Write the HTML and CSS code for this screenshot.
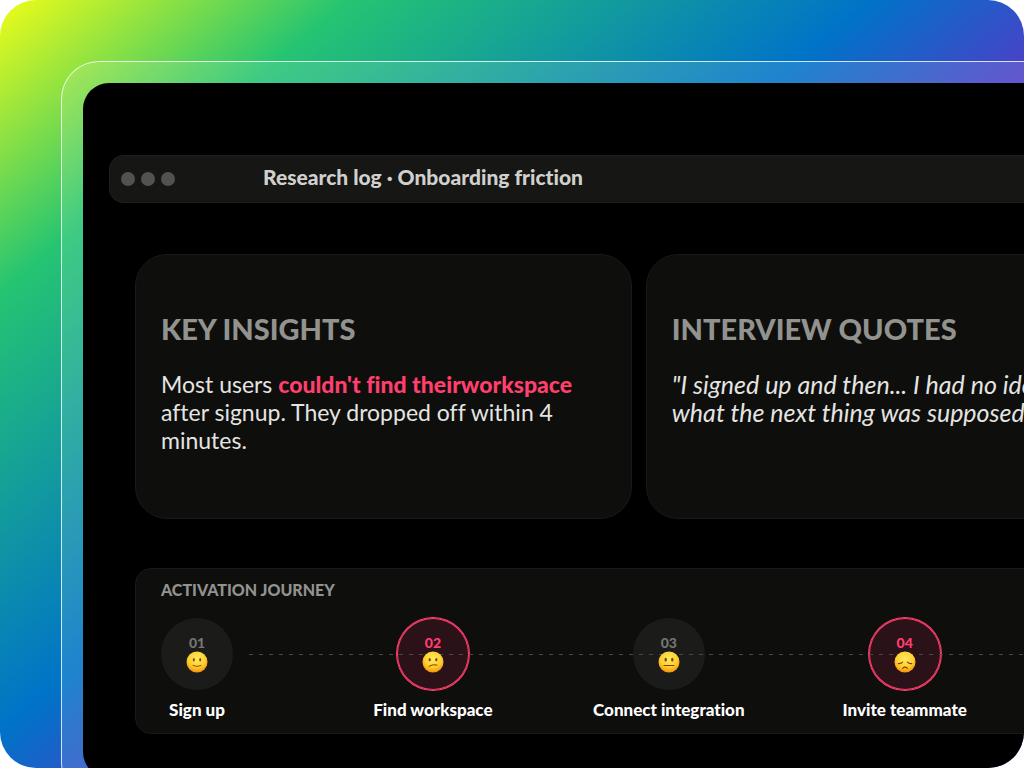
FILE: index.html
```
<!DOCTYPE html>
<html lang="en">
<head>
    <meta charset="UTF-8">
    <meta name="viewport" content="width=device-width, initial-scale=1.0">
    <title>Research log · Onboarding friction</title>
    <link rel="stylesheet" href="styles.css">
</head>
<body>

    <div class="stage">
        <div class="frame">
            <main class="screen">

                <header class="titlebar">
                    <div class="dots">
                        <span class="dot"></span>
                        <span class="dot"></span>
                        <span class="dot"></span>
                    </div>
                    <h1 class="title">Research log · Onboarding friction</h1>
                </header>

                <div class="content">
                    <div class="cards">
                        <section class="card">
                            <h2 class="card-heading">KEY INSIGHTS</h2>
                            <p class="card-text">Most users <strong>couldn't find theirworkspace</strong> after signup. They dropped off within 4 minutes.</p>
                        </section>
                        <section class="card">
                            <h2 class="card-heading">INTERVIEW QUOTES</h2>
                            <p class="card-text quote">"I signed up and then... I had no idea<br>what the next thing was supposed</p>
                        </section>
                    </div>

                    <section class="journey">
                        <h2 class="journey-heading">ACTIVATION JOURNEY</h2>
                        <ol class="steps">
                            <li class="step">
                                <div class="bubble">
                                    <span class="number">01</span>
                                    <svg class="face" viewBox="0 0 22 22" aria-hidden="true">
                                        <defs>
                                            <radialGradient id="skin" cx="50%" cy="34%" r="66%">
                                                <stop offset="0" stop-color="#ffe95e"/>
                                                <stop offset="0.6" stop-color="#ffd02f"/>
                                                <stop offset="1" stop-color="#f5920c"/>
                                            </radialGradient>
                                        </defs>
                                        <circle cx="11" cy="11" r="10.5" fill="url(#skin)"/>
                                        <ellipse cx="7.8" cy="8.7" rx="1" ry="1.7" fill="#774508"/>
                                        <ellipse cx="14.2" cy="8.7" rx="1" ry="1.7" fill="#774508"/>
                                        <path d="M7 14.5q4 2.2 8 0" fill="none" stroke="#774508" stroke-width="0.9" stroke-linecap="round"/>
                                    </svg>
                                </div>
                                <span class="label">Sign up</span>
                            </li>
                            <li class="step alert">
                                <div class="bubble">
                                    <span class="number">02</span>
                                    <svg class="face" viewBox="0 0 22 22" aria-hidden="true">
                                        <circle cx="11" cy="11" r="10.5" fill="url(#skin)"/>
                                        <ellipse cx="7.7" cy="8.7" rx="1.1" ry="1.6" fill="#774508"/>
                                        <ellipse cx="14.3" cy="8.7" rx="1.1" ry="1.6" fill="#774508"/>
                                        <path d="M7 15.2q3.4-2.2 8-1.2" fill="none" stroke="#774508" stroke-width="1" stroke-linecap="round"/>
                                    </svg>
                                </div>
                                <span class="label">Find workspace</span>
                            </li>
                            <li class="step">
                                <div class="bubble">
                                    <span class="number">03</span>
                                    <svg class="face" viewBox="0 0 22 22" aria-hidden="true">
                                        <circle cx="11" cy="11" r="10.5" fill="url(#skin)"/>
                                        <ellipse cx="7.7" cy="8.7" rx="1.2" ry="1.9" fill="#774508"/>
                                        <ellipse cx="14.3" cy="8.7" rx="1.2" ry="1.9" fill="#774508"/>
                                        <path d="M6 14.5h10" fill="none" stroke="#774508" stroke-width="1" stroke-linecap="round"/>
                                    </svg>
                                </div>
                                <span class="label">Connect integration</span>
                            </li>
                            <li class="step alert">
                                <div class="bubble">
                                    <span class="number">04</span>
                                    <svg class="face" viewBox="0 0 22 22" aria-hidden="true">
                                        <circle cx="11" cy="11" r="10.5" fill="url(#skin)"/>
                                        <path d="M4.2 12.6q2.8.4 4.4-1.4M17.8 12.6q-2.8.4-4.4-1.4" fill="none" stroke="#774508" stroke-width="1.1" stroke-linecap="round"/>
                                        <path d="M8.6 17.4q2.4-2.4 4.8 0" fill="none" stroke="#774508" stroke-width="1.1" stroke-linecap="round"/>
                                    </svg>
                                </div>
                                <span class="label">Invite teammate</span>
                            </li>
                        </ol>
                    </section>
                </div>

            </main>
        </div>
    </div>

</body>
</html>
```
FILE: styles.css
```
* {
    box-sizing: border-box;
}

body {
    margin: 0;
    background-color: #ffffff;
    font-family: Lato, "Open Sans", sans-serif;
    font-variant-ligatures: none;
    color: #e4e4e2;
}

h1, h2, p, ol {
    margin: 0;
    padding: 0;
}

.stage {
    height: 100vh;
    padding: 61px 0 0 61px;
    overflow: hidden;
    border-radius: 36px;
    background: linear-gradient(140deg, #e4fa1c 1%, #25c472 18%, #0073c8 45%, #5639c8 59%);
}

/* runs past the right edge, the stage crops it */
.frame {
    width: 120%;
    padding: 21px;
    border: 1px solid rgba(255, 255, 255, 0.8);
    border-radius: 38px;
    background-color: rgba(255, 255, 255, 0.12);
}

.screen {
    padding: 72px 26px 44px;
    border-radius: 26px;
    background-color: #000000;
}

.titlebar {
    display: flex;
    align-items: center;
    gap: 88px;
    height: 48px;
    padding: 0 11px;
    border: 1px solid #1f1f1e;
    border-radius: 14px;
    background-color: #161614;
}

.dots {
    display: flex;
    gap: 6px;
}

.dot {
    width: 14px;
    height: 14px;
    border-radius: 50%;
    background-color: #525252;
}

.title {
    padding-bottom: 4px;
    font-size: 21px;
    line-height: 24px;
    font-weight: 900;
    color: #d0d0ce;
}

.content {
    padding: 51px 26px 0;
}

.cards {
    display: grid;
    grid-template-columns: 1fr 1fr;
    gap: 14px;
    margin-bottom: 49px;
}

.card {
    min-height: 265px;
    padding: 54px 25px;
    border: 1px solid #191918;
    border-radius: 32px;
    background-color: #0e0e0c;
}

.card-heading {
    margin-bottom: 21px;
    font-size: 29px;
    line-height: 40px;
    font-weight: 900;
    color: #92928f;
}

.card-text {
    font-size: 23px;
    line-height: 28px;
}

.card-text strong {
    font-weight: 900;
    color: #ff3f6e;
}

.quote {
    font-size: 25px;
    font-style: italic;
    white-space: nowrap;
}

.journey {
    padding: 11px 37px 11px 25px;
    border: 1px solid #191918;
    border-radius: 16px;
    background-color: #0e0e0c;
}

.journey-heading {
    margin-bottom: 18px;
    font-size: 16px;
    line-height: 20px;
    font-weight: 900;
    color: #92928f;
}

.steps {
    position: relative;
    display: grid;
    grid-template-columns: repeat(4, 1fr);
    list-style: none;
}

/* dashed track drawn across the bubbles */
.steps::before {
    content: "";
    position: absolute;
    top: 36px;
    left: 88px;
    right: 0;
    height: 1px;
    background: repeating-linear-gradient(to right, #484846 0, #484846 4px, transparent 4px, transparent 10px);
}

.step {
    display: flex;
    flex-direction: column;
    align-items: center;
    gap: 8px;
    width: 72px;
}

.bubble {
    display: flex;
    flex-direction: column;
    align-items: center;
    width: 72px;
    height: 72px;
    padding-top: 16px;
    border-radius: 50%;
    background-color: #1b1b1a;
}

.number {
    font-size: 14px;
    line-height: 17px;
    font-weight: 900;
    color: #757573;
}

.face {
    position: relative;
    width: 22px;
    height: 22px;
}

.label {
    font-size: 17px;
    line-height: 24px;
    font-weight: 900;
    white-space: nowrap;
    color: #ffffff;
}

.alert .bubble {
    background-color: #2b1218;
    box-shadow: 0 0 0 1px #ff3f6e, inset 0 0 0 1px #ff3f6e;
}

.alert .number {
    color: #ff3f6e;
}
```
